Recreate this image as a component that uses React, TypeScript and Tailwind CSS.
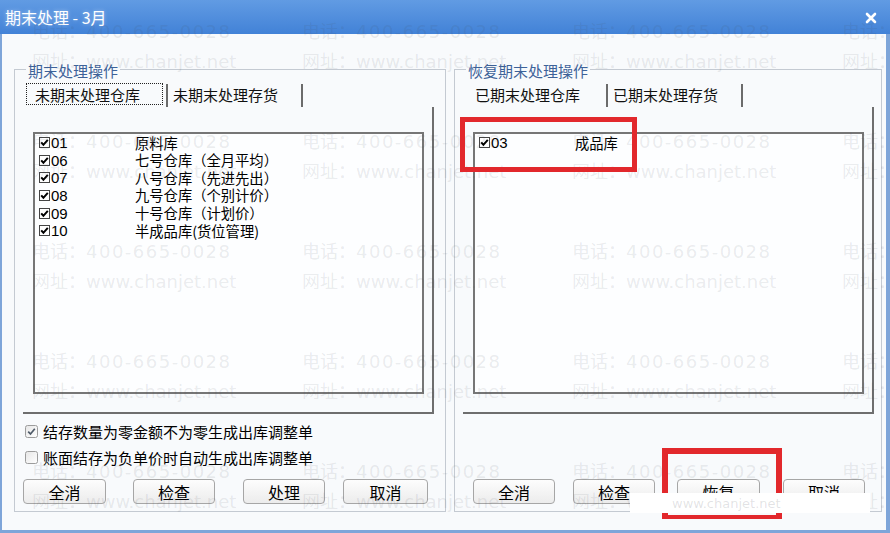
import React from 'react';

const leftRows: [string, string][] = [
  ['01', '原料库'],
  ['06', '七号仓库（全月平均）'],
  ['07', '八号仓库（先进先出）'],
  ['08', '九号仓库（个别计价）'],
  ['09', '十号仓库（计划价）'],
  ['10', '半成品库(货位管理)'],
];

const rightRows: [string, string][] = [['03', '成品库']];

// classic sunken list checkbox
function ListCheck() {
  return (
    <svg width="11" height="11" viewBox="0 0 11 11" className="shrink-0">
      <rect x="0.5" y="0.5" width="10" height="10" fill="#fff" stroke="#444" />
      <path d="M2.2 5.4 L4.4 7.8 L8.8 2.8" fill="none" stroke="#000" strokeWidth="2" />
    </svg>
  );
}

// win7 style checkbox
function WinCheck({ checked }: { checked?: boolean }) {
  return (
    <svg width="13" height="13" viewBox="0 0 13 13" className="shrink-0">
      <defs>
        <linearGradient id="cbg" x1="0" y1="0" x2="1" y2="1">
          <stop offset="0" stopColor="#e6e6e6" />
          <stop offset="1" stopColor="#ffffff" />
        </linearGradient>
      </defs>
      <rect x="0.5" y="0.5" width="12" height="12" rx="2" fill="url(#cbg)" stroke="#9c9c9c" />
      {checked && <path d="M3.2 6.6 L5.5 9 L9.8 3.8" fill="none" stroke="#4f5b69" strokeWidth="1.7" />}
    </svg>
  );
}

function Btn({ label, className }: { label: string; className?: string }) {
  return (
    <div
      className={`flex h-[25px] items-center justify-center rounded-[4px] border border-[#a6a6a6] bg-gradient-to-b from-[#fdfdfd] to-[#ececec] text-[16px] leading-none text-black ${className ?? ''}`}
    >
      {label}
    </div>
  );
}

function Group({ title, className, children }: { title: string; className?: string; children: React.ReactNode }) {
  return (
    <div className={`relative flex flex-col border border-[#c4cad2] ${className ?? ''}`}>
      <span className="absolute left-[11px] top-[-9px] bg-[#f8fafc] px-[2px] text-[15px] leading-[20px] text-[#3d6299]">
        {title}
      </span>
      {children}
    </div>
  );
}

function Tabs({ first, second, focused }: { first: string; second: string; focused?: boolean }) {
  return (
    <div className="mt-[13px] flex h-[24px] items-start pl-[11px] text-[15px] leading-none text-[#111]">
      <div
        className={`flex h-[22px] w-[137px] items-center border border-dotted pl-[8px] ${focused ? 'border-[#222]' : 'border-transparent'}`}
      >
        {first}
      </div>
      <div className="ml-[3px] mt-[1px] h-[23px] w-[2px] bg-[#6b6b6b]" />
      <div className="flex h-[22px] w-[133px] items-center pl-[5px]">{second}</div>
      <div className="mt-[1px] h-[23px] w-[2px] bg-[#6b6b6b]" />
    </div>
  );
}

function ListPanel({ rows }: { rows: [string, string][] }) {
  return (
    <div className="ml-[8px] h-[307px] w-[411px] border-r-2 border-b-2 border-[#6e6e6e] pl-[10px] pt-[25px]">
      <div className="h-[262px] w-[391px] border-2 border-[#767676] bg-[#fdfeff] pl-[4px] font-['Liberation_Sans','Noto_Sans_CJK_SC',sans-serif] text-[15px] text-black">
        {rows.map(([code, name]) => (
          <div key={code} className="flex h-[17.6px] items-center leading-none">
            <ListCheck />
            <span className="w-[85px] pl-[1px]">{code}</span>
            <span className="font-['Noto_Sans_CJK_SC',sans-serif] text-[14.3px]">{name}</span>
          </div>
        ))}
      </div>
    </div>
  );
}

const wmCols = [0, 1, 2, 3];
const wmRows = [0, 1, 2, 3, 4];

export default function App() {
  return (
    <div className="relative h-[533px] w-[890px] overflow-hidden bg-[#f8fafc] font-['Noto_Sans_CJK_SC','Liberation_Sans',sans-serif]">
      {/* title bar */}
      <div className="flex h-[34px] items-center justify-between bg-gradient-to-b from-[#619be3] to-[#4282d7] pl-[5px] pr-[13px]">
        <span className="text-[16px] leading-none text-white [text-shadow:0_0_4px_rgba(255,255,255,0.45)]">期末处理 - 3月</span>
        <svg width="12" height="12" viewBox="0 0 12 12" className="mb-[-2px]">
          <path d="M2 2 L10 10 M10 2 L2 10" stroke="#fff" strokeWidth="2.6" strokeLinecap="round" />
        </svg>
      </div>

      {/* body */}
      <div className="flex h-[499px] gap-[8px] border-b-[3px] border-l-2 border-r-4 border-[#7ea5d9] pl-[12px] pt-[35px]">
        <Group title="期末处理操作" className="h-[443px] w-[432px]">
          <Tabs first="未期末处理仓库" second="未期末处理存货" focused />
          <ListPanel rows={leftRows} />
          <div className="mt-[9px] flex h-[16px] items-center gap-[5px] pl-[10px] text-[15px] leading-none text-black">
            <WinCheck checked />
            <span>结存数量为零金额不为零生成出库调整单</span>
          </div>
          <div className="mt-[10px] flex h-[16px] items-center gap-[5px] pl-[10px] text-[15px] leading-none text-black">
            <WinCheck />
            <span>账面结存为负单价时自动生成出库调整单</span>
          </div>
          <div className="mt-[14px] flex">
            <Btn label="全消" className="ml-[8px] w-[83px]" />
            <Btn label="检查" className="ml-[27px] w-[82px]" />
            <Btn label="处理" className="ml-[28px] w-[82px]" />
            <Btn label="取消" className="ml-[18px] w-[85px]" />
          </div>
        </Group>

        <Group title="恢复期末处理操作" className="h-[443px] w-[428px]">
          <Tabs first="已期末处理仓库" second="已期末处理存货" />
          <ListPanel rows={rightRows} />
          <div className="mt-[65px] flex">
            <Btn label="全消" className="ml-[18px] w-[82px]" />
            <Btn label="检查" className="ml-[18px] w-[82px]" />
            <Btn label="恢复" className="ml-[22px] w-[83px]" />
            <Btn label="取消" className="ml-[23px] w-[82px]" />
          </div>
        </Group>
      </div>

      {/* watermark */}
      <div className="pointer-events-none absolute inset-0 pl-[32px] pt-[16px]">
        {wmRows.map((r) => (
          <div key={r} className="flex h-[110px]">
            {wmCols.map((c) => (
              <div key={c} className="w-[270px] shrink-0 text-[18px] leading-[29px] whitespace-nowrap text-[rgba(70,75,85,0.11)]">
                <div>
                  电话：<span className="font-['DejaVu_Sans',sans-serif] tracking-[1.5px]">400-665-0028</span>
                </div>
                <div>
                  网址：<span className="font-['DejaVu_Sans',sans-serif]">www.chanjet.net</span>
                </div>
              </div>
            ))}
          </div>
        ))}
      </div>

      {/* annotations */}
      <div className="pointer-events-none absolute left-[460px] top-[117px] h-[55px] w-[177px] border-[5px] border-[#e2282c]" />
      <div className="pointer-events-none absolute left-[662px] top-[448px] h-[71px] w-[120px] border-[6px] border-b-[4px] border-[#e2282c]" />
      <div className="pointer-events-none absolute left-[630px] top-[493px] flex h-[20px] w-[240px] items-center bg-white pl-[42px]">
        <span className="font-['DejaVu_Sans',sans-serif] text-[13px] leading-none text-[rgba(70,75,85,0.16)]">www.chanjet.net</span>
      </div>
    </div>
  );
}
